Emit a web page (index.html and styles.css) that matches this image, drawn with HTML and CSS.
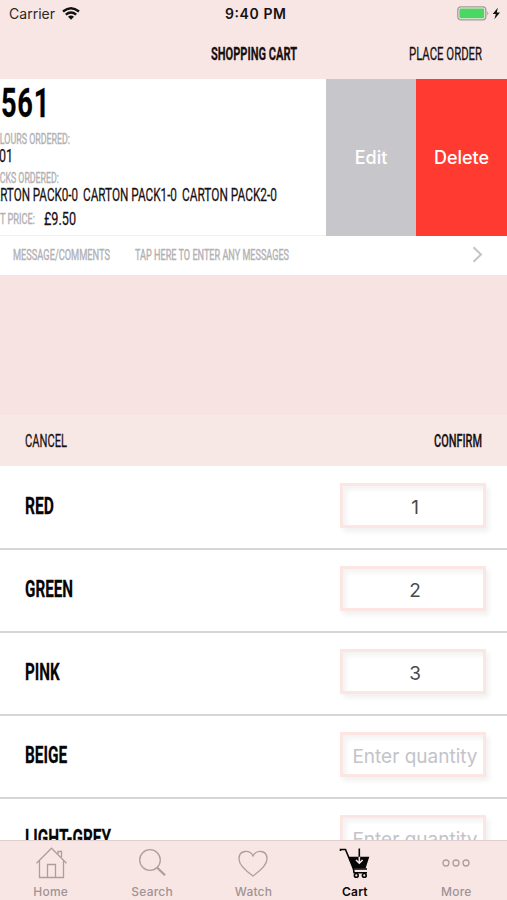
FILE: index.html
```html
<!DOCTYPE html>
<html lang="en">
<head>
<meta charset="utf-8">
<title>Shopping Cart</title>
<link rel="stylesheet" href="styles.css">
</head>
<body>
<div class="phone">
  <header class="top">
    <div class="status">
      <div class="carrier"><svg width="46" height="10" class="label plain"><text y="10" textLength="46">Carrier</text></svg>
        <svg width="18" height="13" viewBox="0 0 18 13" fill="none" stroke="#111" stroke-width="2.4"><path d="M1 4.5Q9-2 17 4.5M3.8 7.6Q9 3.3 14.2 7.6"/><path d="M6 9.8Q9 7.4 12 9.8L9 12.8Z" fill="#111" stroke="none"/></svg>
      </div>
      <svg width="61" height="10" class="label plain time"><text y="10" textLength="61">9:40 PM</text></svg>
      <svg class="battery" width="45" height="15" viewBox="0 0 45 15"><rect x=".8" y=".8" width="28" height="13" rx="3" fill="none" stroke="#a3999a" stroke-width="1.3"/><rect x="2.4" y="2.4" width="24.8" height="9.8" rx="1.4" fill="#4bd763"/><path d="M30.3 5.2q2 2.2 0 4.4z" fill="#a3999a"/><path d="M40.8 1.8L35.7 8h3.1l-1.4 5.2L43 6.5h-3.2z" fill="#111"/></svg>
    </div>
    <div class="nav">
      <span></span>
      <svg class="label heavy" width="86" height="13"><text y="13" textLength="126.5" lengthAdjust="spacingAndGlyphs">SHOPPING CART</text></svg>
      <svg class="label end" width="73" height="13"><text y="13" textLength="107.4" lengthAdjust="spacingAndGlyphs">PLACE ORDER</text></svg>
    </div>
  </header>

  <section class="item">
    <div class="details">
      <svg class="label huge" width="49" height="28"><text y="28" textLength="71" lengthAdjust="spacing">561</text></svg>
      <svg class="label small l1" width="82" height="10"><text y="10" textLength="120.6" lengthAdjust="spacingAndGlyphs">COLOURS ORDERED:</text></svg>
      <svg class="label l2" width="14" height="13"><text y="13" textLength="20.6" lengthAdjust="spacingAndGlyphs">01</text></svg>
      <svg class="label small l3" width="70" height="10"><text y="10" textLength="102.9" lengthAdjust="spacingAndGlyphs">PACKS ORDERED:</text></svg>
      <div class="packs">
        <svg class="label" width="93" height="13"><text y="13" textLength="136.8" lengthAdjust="spacingAndGlyphs">CARTON PACK0-0</text></svg>
        <svg class="label" width="94" height="13"><text y="13" textLength="138.2" lengthAdjust="spacingAndGlyphs">CARTON PACK1-0</text></svg>
        <svg class="label" width="95" height="13"><text y="13" textLength="139.7" lengthAdjust="spacingAndGlyphs">CARTON PACK2-0</text></svg>
      </div>
      <div class="price">
        <svg class="label small" width="47" height="10"><text y="10" textLength="69.1" lengthAdjust="spacingAndGlyphs">NET PRICE:</text></svg>
        <svg class="label" width="32" height="13"><text y="13" textLength="47.1" lengthAdjust="spacingAndGlyphs">£9.50</text></svg>
      </div>
    </div>
    <div class="action edit">Edit</div>
    <div class="action delete">Delete</div>
  </section>
  <section class="message">
    <svg class="label small" width="97" height="10"><text y="10" textLength="142.6" lengthAdjust="spacingAndGlyphs">MESSAGE/COMMENTS</text></svg>
    <svg class="label small" width="154" height="10"><text y="10" textLength="226.5" lengthAdjust="spacingAndGlyphs">TAP HERE TO ENTER ANY MESSAGES</text></svg>
    <svg class="chevron" width="11" height="17" viewBox="0 0 11 17" fill="none" stroke="#c4c3c6" stroke-width="2"><path d="M1.5 1.2L9 8.5 1.5 15.8"/></svg>
  </section>
  <div class="gap"></div>
  <div class="toolbar">
    <svg class="label" width="42" height="13"><text y="13" textLength="61.8" lengthAdjust="spacingAndGlyphs">CANCEL</text></svg>
    <svg class="label mid" width="48" height="13"><text y="13" textLength="70.6" lengthAdjust="spacingAndGlyphs">CONFIRM</text></svg>
  </div>
  <main class="rows">
    <div class="row"><svg class="label big" width="29" height="17"><text y="17" textLength="42.6" lengthAdjust="spacingAndGlyphs">RED</text></svg><div class="field">1</div></div>
    <div class="row"><svg class="label big" width="48" height="17"><text y="17" textLength="70.6" lengthAdjust="spacingAndGlyphs">GREEN</text></svg><div class="field">2</div></div>
    <div class="row"><svg class="label big" width="35" height="17"><text y="17" textLength="51" lengthAdjust="spacingAndGlyphs">PINK</text></svg><div class="field">3</div></div>
    <div class="row"><svg class="label big" width="42" height="17"><text y="17" textLength="62" lengthAdjust="spacingAndGlyphs">BEIGE</text></svg><div class="field empty">Enter quantity</div></div>
    <div class="row"><svg class="label big" width="86" height="17"><text y="17" textLength="126.5" lengthAdjust="spacingAndGlyphs">LIGHT-GREY</text></svg><div class="field empty">Enter quantity</div></div>
  </main>
  <nav class="tabs">
    <div class="tab"><svg width="32" height="32" viewBox="0 0 32 32"><path d="M1.500 16.200L16.500 1.200 31.500 16.200M4.500 14v16.500h24V14M12.500 30.500V17.500h8v13M23 7V4.500h3.500V10"/></svg>Home</div>
    <div class="tab"><svg width="32" height="32" viewBox="0 0 32 32"><circle cx="14" cy="13" r="10.300"/><path d="M21 20.500l8 7.800" stroke-width="2.300"/></svg>Search</div>
    <div class="tab"><svg width="32" height="32" viewBox="0 0 32 32"><path d="M16 29C9 24 2 18.500 2 12 2 2.300 13 2.700 16 9 19 2.700 30 2.300 30 12 30 18.500 23 24 16 29Z"/></svg>Watch</div>
    <div class="tab active"><svg width="32" height="32" viewBox="0 0 32 32"><path d="M1.500 4V2.500H6.500L14.500 22H28"/><path d="M9.500 9.700H30.300L26.500 21.500H14z" fill="#050505" stroke="none"/><path d="M14.500 22L15 25.700H28"/><circle cx="17.300" cy="28.400" r="1.900"/><circle cx="25.300" cy="28.400" r="1.900"/><path d="M20.300 1.500V10"/><path d="M20.300 9.700V16M17 13l3.300 3.200 3.300-3.200" stroke="#f8e6e4"/></svg>Cart</div>
    <div class="tab"><svg width="32" height="32" viewBox="0 0 32 32"><circle cx="6" cy="16" r="3"/><circle cx="16" cy="16" r="3"/><circle cx="26" cy="16" r="3"/></svg>More</div>
  </nav>
</div>
</body>
</html>
```
FILE: styles.css
```css
* { box-sizing: border-box; }
body { margin: 0; font-family: Inter, "Liberation Sans", sans-serif; background: #f8e6e4; }
svg { display: block; flex: none; }
.phone { width: 507px; height: 900px; overflow: hidden; display: flex; flex-direction: column; }
.label { overflow: visible; font: 400 18.2px Roboto, sans-serif; fill: #171112; stroke: #171112; stroke-width: .25px; }
.label text { transform: scaleX(.68); }
.label.small { font-size: 14.4px; fill: #b2b1b3; stroke: #b2b1b3; stroke-width: .4px; }
.label.heavy { font-weight: 700; }
.label.mid { font-weight: 500; }
.label.big { font-size: 23.6px; font-weight: 700; fill: #050505; }
.label.huge { font-size: 40px; font-weight: 700; fill: #000; }
.label.plain { font: 400 14px Inter, sans-serif; fill: #2e2829; stroke: none; }
.label.plain text { transform: none; }
.label.time { font-weight: 600; fill: #171112; justify-self: center; }

.top { height: 79px; flex: none; }
.status { height: 27px; display: grid; grid-template-columns: 1fr 1fr 1fr; align-items: center; padding: 0 5px 0 9px; }
.carrier { display: flex; gap: 7px; align-items: center; }
.battery { justify-self: end; }
.nav { height: 52px; display: grid; grid-template-columns: 1fr 86px 1fr; padding: 20px 25px 0; }
.end { justify-self: end; }

.item { height: 157px; display: flex; flex: none; background: #fff; border-bottom: 1px solid #f0f0f0; }
.details { width: 326px; overflow: hidden; padding-top: 10px; }
.huge { margin-left: 1px; }
.l1 { margin: 17px 0 0 -12px; }
.l2 { margin: 5px 0 0 -1px; }
.l3 { margin: 11px 0 0 -11px; }
.packs { display: flex; gap: 5px; margin: 5px 0 0 -15px; }
.price { display: flex; gap: 9px; align-items: flex-end; margin: 11px 0 0 -12px; }
.price .small { margin-bottom: 1px; }
.action { height: 157px; display: flex; align-items: center; justify-content: center; color: #fff; font-size: 18px; font-weight: 500; }
.edit { width: 90px; background: #c7c6cb; }
.delete { width: 91px; background: #ff3a30; }
.message { height: 39px; flex: none; display: flex; gap: 25px; align-items: center; padding: 0 24px 2px 13px; background: #fff; }
.chevron { margin-left: auto; }
.gap { height: 140px; flex: none; background: #f7e4e2; }
.toolbar { height: 51px; flex: none; display: flex; justify-content: space-between; align-items: center; padding: 0 25px; background: #f7e7e5; }

.rows { height: 374px; flex: none; overflow: hidden; background: #fff; padding-top: 1px; }
.row { height: 83px; display: flex; justify-content: space-between; align-items: center; padding: 0 21px 4px 25px; border-bottom: 2px solid #d6d6d8; }
.field { width: 146px; height: 45px; display: flex; align-items: center; justify-content: center; padding: 4px 0 0 4px; border: 3px solid #fbe6e3; font-size: 19px; color: #4a4a4c; white-space: nowrap; box-shadow: 3px 4px 5px #f1f1f1, inset 4px 4px 5px #f4f4f4; }
.empty { color: #c3c3c8; }

.tabs { height: 60px; flex: none; display: grid; grid-template-columns: repeat(5, 1fr); background: #f8e6e4; border-top: 1px solid #dfcfce; }
.tab { display: flex; flex-direction: column; align-items: center; padding-top: 6px; gap: 5px; font-size: 12px; line-height: 16px; font-weight: 500; letter-spacing: .2px; color: #a09394; }
.tab svg { fill: none; stroke: #ac9e9f; stroke-width: 1.3; }
.active { color: #0b0809; font-weight: 600; }
.active svg { stroke: #050505; stroke-width: 1.6; }
```
